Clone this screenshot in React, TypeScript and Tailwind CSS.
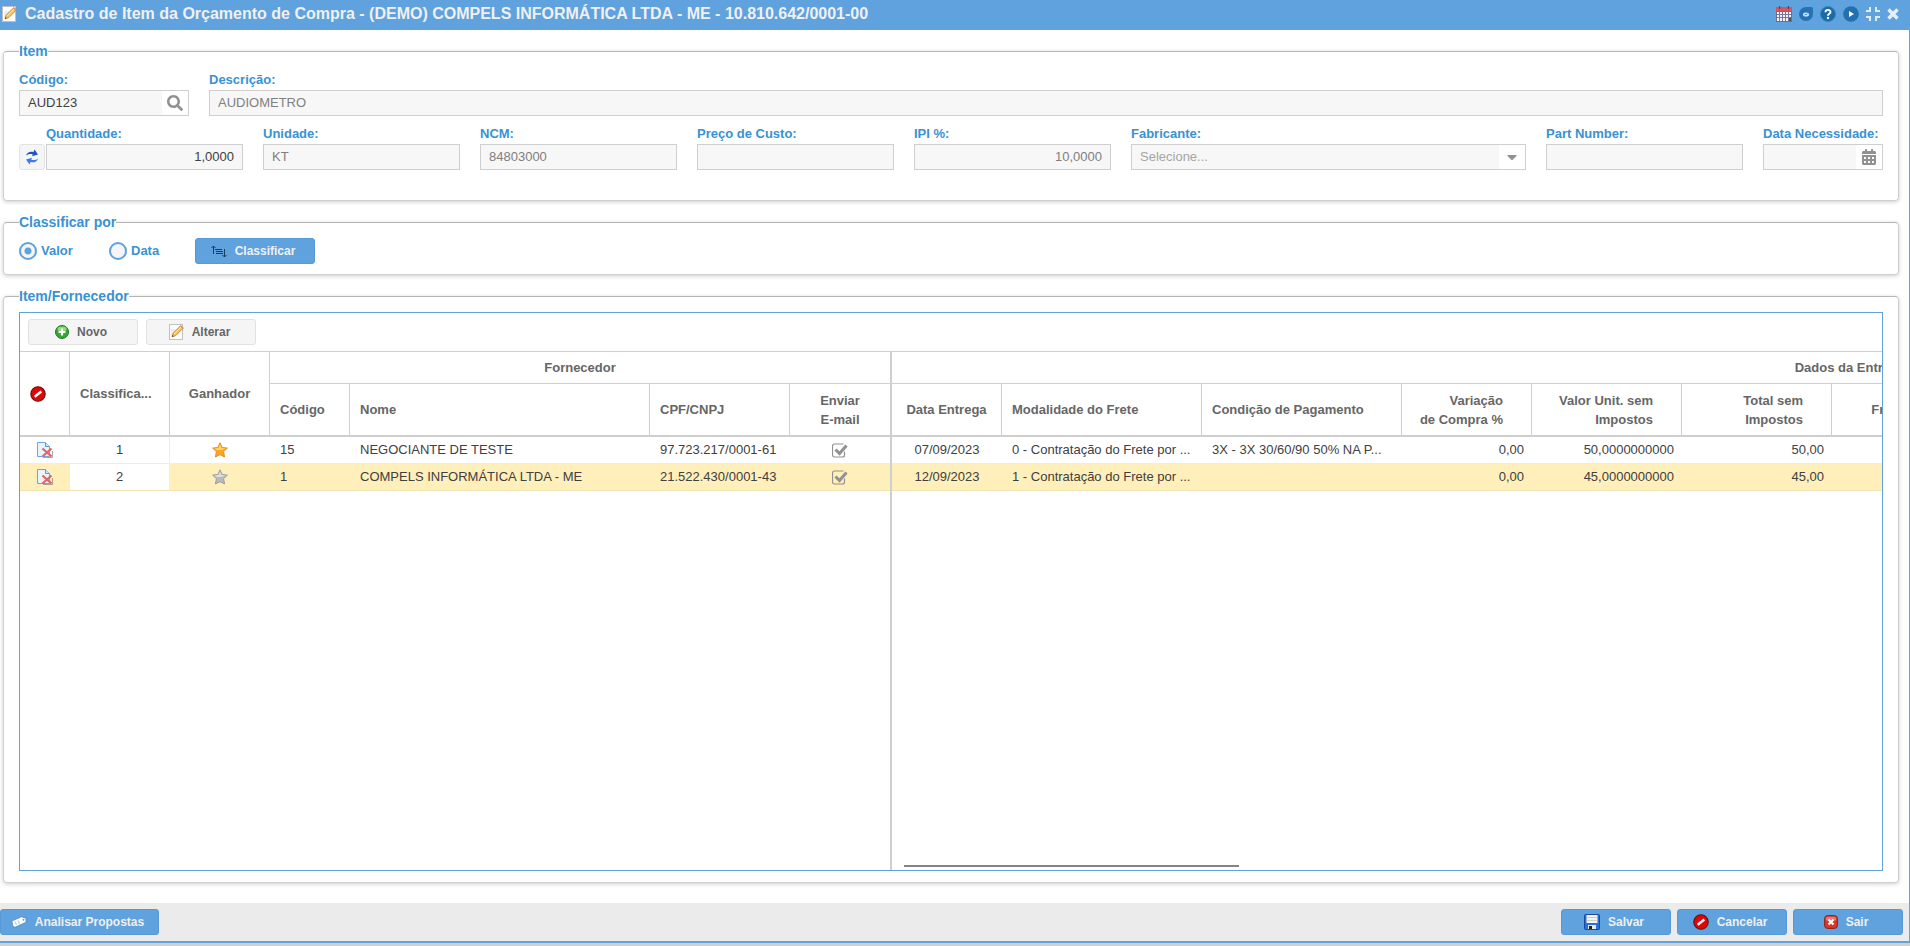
import { useState, type ReactNode } from 'react'
import { FaCalendarAlt, FaCaretDown, FaSearch } from 'react-icons/fa'

function EditIcon() {
  return (
    <svg width="16" height="16" viewBox="0 0 16 16" aria-hidden="true">
      <rect x="1.500" y=".5" width="13" height="15" fill="#fff" stroke="#c0c0c0" />
      <path d="M3 6h5M3 8h4M3 10h2" stroke="#dcdcdc" />
      <path d="M4 12.800 5.200 9 12.600 1.800l2.600 2.400L7.800 11.600Z" fill="#f6c463" stroke="#b87f2a" strokeWidth=".8" />
      <path d="m6 10 7.200-7" stroke="#ffe9a8" />
      <path d="m4 12.800.5-1.700 1.200 1.100Z" fill="#333" />
      <path d="m12.600 1.800 2.600 2.400" stroke="#d98a7a" strokeWidth="1.400" />
    </svg>
  )
}

function ScheduleIcon() {
  return (
    <svg width="16" height="16" viewBox="0 0 16 16" aria-hidden="true">
      <rect y="1" width="16" height="15" fill="#6b6f8c" />
      <rect y="1" width="16" height="4" fill="#e0525b" />
      <path d="M3.500 0v3M12.500 0v3" stroke="#4f4a5c" strokeWidth="1.400" />
      <rect x="1" y="6" width="14" height="9" fill="#f3f3f8" />
      <path d="M3.500 6v9M6.500 6v9M9.500 6v9M12.500 6v9M1 8.500h14M1 11.500h14" stroke="#75789a" />
      <rect x="13" y="12" width="2" height="3" fill="#555" />
    </svg>
  )
}

function ChatIcon() {
  return (
    <svg width="14" height="14" viewBox="0 0 14 14" aria-hidden="true">
      <path d="M7 0h5.500A1.500 1.500 0 0 1 14 1.500V7a7 7 0 1 1-7-7Z" fill="#2474b5" />
      <ellipse cx="7" cy="7.500" rx="3" ry="2" fill="#d8e8f6" />
      <path d="M5.500 7.800 8.500 7" stroke="#2474b5" strokeWidth=".8" />
    </svg>
  )
}

function HelpIcon() {
  return (
    <svg width="16" height="16" viewBox="0 0 16 16" aria-hidden="true">
      <circle cx="8" cy="8" r="7.500" fill="#1c6ba8" stroke="#2f87c0" />
      <path d="M5.500 6.200C5.500 3.200 10.500 3.200 10.500 6 10.500 7.800 8 7.700 8 9.700" fill="none" stroke="#fff" strokeWidth="1.900" />
      <circle cx="8" cy="12" r="1.200" fill="#fff" />
    </svg>
  )
}

function PlayIcon() {
  return (
    <svg width="16" height="16" viewBox="0 0 16 16" aria-hidden="true">
      <circle cx="8" cy="8" r="7.800" fill="#2270af" />
      <path d="M6 5v6l5-3Z" fill="#fff" />
    </svg>
  )
}

function CompressIcon() {
  return (
    <svg width="14" height="14" viewBox="0 0 14 14" aria-hidden="true">
      <path d="M0 4h4V0M10 0v4h4M14 10h-4v4M4 14v-4H0" fill="none" stroke="#dfecf8" strokeWidth="2" />
    </svg>
  )
}

function CloseIcon() {
  return (
    <svg width="12" height="12" viewBox="0 0 12 12" aria-hidden="true">
      <path d="m1.500 1.500 9 9m0-9-9 9" stroke="#e6f0f9" strokeWidth="3.400" />
    </svg>
  )
}

function RefreshIcon() {
  return (
    <svg width="12" height="16" viewBox="0 0 12 16" aria-hidden="true">
      <path d="M0 6.500C1 3 4.500 2 7.500 3L8.500.5 12 5.500 6 7.200l.8-2C4 4.500 1.800 5 0 6.500Z" fill="#1d54c8" />
      <path d="M12 9.500c-1 3.500-4.500 4.500-7.500 3.500l-1 2.500L0 10.500l6-1.700-.8 2c2.800.7 5 .2 6.800-1.300Z" fill="#3f7be8" />
    </svg>
  )
}

function SortIcon() {
  return (
    <svg width="16" height="13" viewBox="0 0 16 13" aria-hidden="true" fill="none" stroke="#1d3c5c">
      <path d="M2.500 9V1M.5 3l2-2 2 2M13.500 4v8M11.500 10l2 2 2-2M4 4.500h7M5 6.500h7M5 8.500h7" />
    </svg>
  )
}

function AddIcon() {
  return (
    <svg width="14" height="14" viewBox="0 0 14 14" aria-hidden="true">
      <circle cx="7" cy="7" r="6.500" fill="#3aa535" stroke="#1f7a22" />
      <ellipse cx="7" cy="4" rx="4.500" ry="2.600" fill="#8fdb7c" />
      <path d="M7 3.500v7M3.500 7h7" stroke="#fff" strokeWidth="2.200" />
    </svg>
  )
}

function DenyIcon() {
  return (
    <svg width="16" height="16" viewBox="0 0 16 16" aria-hidden="true">
      <circle cx="8" cy="8" r="7.200" fill="#e00707" stroke="#6b0a0a" strokeWidth="1.100" />
      <path d="m4.700 10.700 6.600-5.200" stroke="#fff" strokeWidth="2.400" />
    </svg>
  )
}

function DeleteIcon() {
  return (
    <svg width="16" height="16" viewBox="0 0 16 16" aria-hidden="true">
      <path d="M.5.5h8l4 4v10H.5Z" fill="#eaf2fc" stroke="#6fa4e4" />
      <path d="M8.500.5v4h4" fill="#d3e4f9" stroke="#5a98e0" />
      <path d="m5.500 6.500 9 8M14.500 6.500l-9 8" stroke="#e26464" strokeWidth="2.200" />
      <path d="M6 15.500h9.500V9" fill="none" stroke="#9a8a8a" strokeWidth=".8" />
    </svg>
  )
}

function StarIcon({ winner }: { winner: boolean }) {
  return (
    <svg width="16" height="16" viewBox="0 0 16 16" aria-hidden="true">
      <path
        d="m8 .8 2.200 4.700 5.200.6-3.800 3.500 1 5.400L8 12.700 3.400 15l1-5.400L.6 6.100l5.200-.6Z"
        fill={winner ? '#fba522' : '#bababa'}
        stroke={winner ? '#dd8a2c' : '#999'}
        strokeWidth=".9"
      />
      <path d="m8 2.600 1.500 3.500 4 .5-4 1.400H4.500l-2-1.400 4-.5Z" fill={winner ? '#ffd462' : '#dedede'} />
    </svg>
  )
}

function CheckIcon() {
  return (
    <svg width="17" height="15" viewBox="0 0 17 15" aria-hidden="true" fill="none" stroke="#919191">
      <path d="M12.500 8.500V12a2 2 0 0 1-2 2h-8a2 2 0 0 1-2-2V3a2 2 0 0 1 2-2h9" strokeWidth="1.200" />
      <path d="m3.500 6.500 4 4 7-8" strokeWidth="3" />
    </svg>
  )
}

function TagIcon() {
  return (
    <svg width="16" height="12" viewBox="0 0 16 12" aria-hidden="true">
      <path d="M.8 5 10.500.8l4.500 1.400v4L4 11.300l-2-1Z" fill="#fff" stroke="#4a7fb0" strokeWidth=".7" />
      <path d="m4 5.500 1.500 3.500M7 4.500 8.500 8" stroke="#b4d4f0" strokeWidth="1.400" />
      <circle cx="12.500" cy="3.800" r="1" fill="#5fa2dd" />
    </svg>
  )
}

function SaveIcon() {
  return (
    <svg width="16" height="16" viewBox="0 0 16 16" aria-hidden="true">
      <rect x=".5" y=".5" width="15" height="15" rx="1" fill="#2a6fd6" stroke="#164a9c" />
      <rect x="2.500" y="1" width="11" height="8" fill="#f2f2f2" />
      <path d="M3 3.500h10M3 6.500h10" stroke="#cfcfcf" />
      <rect x="4" y="11" width="8" height="4" fill="#e8e8e8" />
      <rect x="5" y="12" width="3" height="3" fill="#222" />
    </svg>
  )
}

function ExitIcon() {
  return (
    <svg width="14" height="14" viewBox="0 0 14 14" aria-hidden="true">
      <rect x=".6" y=".6" width="12.800" height="12.800" rx="3" fill="#d8372a" stroke="#8f1e17" />
      <rect x="1.800" y="1.800" width="10.400" height="4" rx="2" fill="#ec7a6c" />
      <path d="m4.500 4.500 5 5m0-5-5 5" stroke="#fff" strokeWidth="2.200" />
    </svg>
  )
}

const fieldBox = 'flex h-[26px] border border-[#cfcfcf] bg-[#f7f7f7]'
const fieldInput = 'min-w-0 flex-1 bg-transparent px-2 text-[13px] outline-none'
const fieldLabel = 'block h-5 whitespace-nowrap text-[13px] leading-5 font-bold text-[#3892d3]'

type FieldProps = {
  id: string
  label: string
  value?: string
  className: string
  inputClass?: string
  trigger?: ReactNode
  triggerLabel?: string
}

function Field({ id, label, value = '', className, inputClass = 'text-[#808080]', trigger, triggerLabel }: FieldProps) {
  return (
    <div className={`min-w-0 ${className}`}>
      <label htmlFor={id} className={fieldLabel}>
        {label}
      </label>
      <div className={fieldBox}>
        <input id={id} type="text" defaultValue={value} className={`${fieldInput} ${inputClass}`} />
        {trigger && (
          <button type="button" aria-label={triggerLabel} className="flex w-[26px] items-center justify-center bg-white text-[#919191]">
            {trigger}
          </button>
        )}
      </div>
    </div>
  )
}

function Panel({ title, className = '', children }: { title: string; className?: string; children: ReactNode }) {
  return (
    <fieldset className={`mr-[10px] ml-[3px] min-w-0 rounded border border-[#cfcfcf] border-t-[#b5b5b5] px-[15px] shadow-[0_1px_4px_rgba(0,0,0,0.2)] ${className}`}>
      <legend className="bg-white text-[14px] leading-4 font-bold text-[#3892d3]">{title}</legend>
      {children}
    </fieldset>
  )
}

function Button({ icon, children, light = false, className = 'w-[110px]' }: { icon: ReactNode; children: ReactNode; light?: boolean; className?: string }) {
  const tone = light ? 'border-[#e1e1e1] bg-[#f5f5f5] text-[#666]' : 'border-[#5599d6] bg-[#5fa2dd] text-[#f0f0f0]'
  return (
    <button type="button" className={`flex h-[26px] items-center justify-center gap-2 rounded-[3px] border pr-1 text-[12px] font-bold ${tone} ${className}`}>
      {icon}
      {children}
    </button>
  )
}

const rows = [
  {
    position: '1',
    winner: true,
    code: '15',
    name: 'NEGOCIANTE DE TESTE',
    document: '97.723.217/0001-61',
    delivery: '07/09/2023',
    freight: '0 - Contratação do Frete por ...',
    payment: '3X - 3X 30/60/90 50% NA P...',
    variation: '0,00',
    unit: '50,0000000000',
    total: '50,00',
  },
  {
    position: '2',
    winner: false,
    code: '1',
    name: 'COMPELS INFORMÁTICA LTDA - ME',
    document: '21.522.430/0001-43',
    delivery: '12/09/2023',
    freight: '1 - Contratação do Frete por ...',
    payment: '',
    variation: '0,00',
    unit: '45,0000000000',
    total: '45,00',
  },
]

const groupTh = 'border-b border-[#cfcfcf] text-center text-[13px] font-bold'
const th = 'border-r border-b-2 border-[#cfcfcf] px-[10px] text-[13px] leading-[19px] font-bold'
const td = 'whitespace-nowrap pr-2 pl-[10px] text-[13px]'
const bodyRow = 'h-[27px] [&>td]:border-b [&>td]:border-b-[#ededed]'
const selectedRow = 'h-[27px] bg-[#ffefbb] [&>td]:border-b [&>td]:border-b-[#f2e3b3]'

function LockedTable({ selected, onSelect }: { selected: number; onSelect: (i: number) => void }) {
  return (
    <table className="w-[870px] table-fixed border-separate border-spacing-0">
      <colgroup>
        <col className="w-[50px]" />
        <col className="w-[100px]" />
        <col className="w-[100px]" />
        <col className="w-[80px]" />
        <col className="w-[300px]" />
        <col className="w-[140px]" />
        <col className="w-[100px]" />
      </colgroup>
      <thead className="text-[#666]">
        <tr className="h-8">
          <th rowSpan={2} className={th}>
            <DenyIcon />
          </th>
          <th rowSpan={2} className={`${th} text-left`}>Classifica...</th>
          <th rowSpan={2} className={`${th} text-center`}>Ganhador</th>
          <th colSpan={4} className={groupTh}>Fornecedor</th>
        </tr>
        <tr className="h-[53px]">
          <th className={`${th} text-left`}>Código</th>
          <th className={`${th} text-left`}>Nome</th>
          <th className={`${th} text-left`}>CPF/CNPJ</th>
          <th className="border-b-2 border-[#cfcfcf] text-center text-[13px] leading-[19px] font-bold">
            Enviar
            <br />
            E-mail
          </th>
        </tr>
      </thead>
      <tbody>
        {rows.map((row, i) => (
          <tr key={row.code} onClick={() => onSelect(i)} className={selected === i ? selectedRow : bodyRow}>
            <td>
              <button type="button" aria-label="Excluir" className="mx-auto block w-4">
                <DeleteIcon />
              </button>
            </td>
            <td className="border-r border-r-[#ededed] bg-white text-center text-[13px]">{row.position}</td>
            <td>
              <div className="flex justify-center">
                <StarIcon winner={row.winner} />
              </div>
            </td>
            <td className={td}>{row.code}</td>
            <td className={td}>{row.name}</td>
            <td className={td}>{row.document}</td>
            <td>
              <div className="flex justify-center">
                <CheckIcon />
              </div>
            </td>
          </tr>
        ))}
      </tbody>
    </table>
  )
}

function DetailTable({ selected, onSelect }: { selected: number; onSelect: (i: number) => void }) {
  return (
    <table className="w-[1916px] table-fixed border-separate border-spacing-0">
      <colgroup>
        <col className="w-[110px]" />
        <col className="w-[200px]" />
        <col className="w-[200px]" />
        <col className="w-[130px]" />
        <col className="w-[150px]" />
        <col className="w-[150px]" />
        <col className="w-[100px]" />
        <col />
      </colgroup>
      <thead className="text-[#666]">
        <tr className="h-8">
          <th colSpan={8} className={groupTh}>Dados da Entrega</th>
        </tr>
        <tr className="h-[53px]">
          <th className={`${th} text-center whitespace-nowrap`}>Data Entrega</th>
          <th className={`${th} text-left`}>Modalidade do Frete</th>
          <th className={`${th} text-left`}>Condição de Pagamento</th>
          <th className={`${th} text-right`}>
            <div className="pr-[18px] whitespace-nowrap">
              Variação
              <br />
              de Compra %
            </div>
          </th>
          <th className={`${th} text-right`}>
            <div className="pr-[18px] whitespace-nowrap">
              Valor Unit. sem
              <br />
              Impostos
            </div>
          </th>
          <th className={`${th} text-right`}>
            <div className="pr-[18px] whitespace-nowrap">
              Total sem
              <br />
              Impostos
            </div>
          </th>
          <th className={`${th} text-right`}>
            <div className="pr-[18px]">Frete</div>
          </th>
          <th className={th} />
        </tr>
      </thead>
      <tbody>
        {rows.map((row, i) => (
          <tr key={row.code} onClick={() => onSelect(i)} className={selected === i ? selectedRow : bodyRow}>
            <td className="text-center text-[13px]">{row.delivery}</td>
            <td className={td}>{row.freight}</td>
            <td className={td}>{row.payment}</td>
            <td className={`${td} text-right`}>{row.variation}</td>
            <td className={`${td} text-right`}>{row.unit}</td>
            <td className={`${td} text-right`}>{row.total}</td>
            <td />
            <td />
          </tr>
        ))}
      </tbody>
    </table>
  )
}

const radio =
  'size-[18px] appearance-none rounded-full border-2 border-[#5fa2dd] bg-[#f5f5f5] checked:bg-[radial-gradient(circle,#5fa2dd_3px,#f5f5f5_4px)]'

export default function App() {
  const [selected, setSelected] = useState(1)
  const [sortBy, setSortBy] = useState('valor')

  return (
    <div className="flex min-h-screen flex-col bg-[#d0d0d0] pb-[3px] font-['Liberation_Sans',Arial,sans-serif] text-[13px] text-[#404040]">
      <div className="flex flex-1 flex-col border-r border-b-2 border-[#5fa2dd] bg-white">
        <header className="flex h-[30px] items-center bg-[#5fa2dd] pr-[10px] pb-[3px] pl-[1px]">
          <EditIcon />
          <h1 className="ml-2 flex-1 text-[16px] leading-5 font-bold text-[#f0f0f0]">
            Cadastro de Item da Orçamento de Compra - (DEMO) COMPELS INFORMÁTICA LTDA - ME - 10.810.642/0001-00
          </h1>
          <div className="flex items-center gap-[7px]">
            <button type="button" aria-label="Agenda"><ScheduleIcon /></button>
            <button type="button" aria-label="Conversa"><ChatIcon /></button>
            <button type="button" aria-label="Ajuda"><HelpIcon /></button>
            <button type="button" aria-label="Vídeo"><PlayIcon /></button>
            <button type="button" aria-label="Restaurar"><CompressIcon /></button>
            <button type="button" aria-label="Fechar"><CloseIcon /></button>
          </div>
        </header>

        <main className="flex flex-1 flex-col pt-[13px]">
          <Panel title="Item" className="pb-[30px]">
            <div className="flex gap-5 pt-[11px]">
              <Field id="codigo" label="Código:" value="AUD123" className="w-[170px]" inputClass="text-[#404040]" trigger={<FaSearch size={16} />} triggerLabel="Pesquisar" />
              <Field id="descricao" label="Descrição:" value="AUDIOMETRO" className="flex-1" />
            </div>
            <div className="flex items-end gap-5 pt-2">
              <div className="flex flex-1 items-end gap-px">
                <button type="button" aria-label="Atualizar" className="flex size-[26px] items-center justify-center rounded-[3px] border border-[#e4e4e4] bg-[#f5f5f5]">
                  <RefreshIcon />
                </button>
                <Field id="quantidade" label="Quantidade:" value="1,0000" className="w-[197px]" inputClass="text-right text-[#404040]" />
              </div>
              <Field id="unidade" label="Unidade:" value="KT" className="w-[197px]" />
              <Field id="ncm" label="NCM:" value="84803000" className="w-[197px]" />
              <Field id="custo" label="Preço de Custo:" className="w-[197px]" />
              <Field id="ipi" label="IPI %:" value="10,0000" className="w-[197px]" inputClass="text-right text-[#808080]" />
              <div className="w-[395px] min-w-0">
                <label htmlFor="fabricante" className={fieldLabel}>
                  Fabricante:
                </label>
                <div className={`relative ${fieldBox}`}>
                  <select id="fabricante" className="min-w-0 flex-1 appearance-none px-2 text-[13px] text-[#a5a5a5] outline-none">
                    <option>Selecione...</option>
                  </select>
                  <span className="pointer-events-none absolute inset-y-0 right-0 flex w-[26px] items-center justify-center bg-white text-[#919191]">
                    <FaCaretDown size={16} />
                  </span>
                </div>
              </div>
              <Field id="part" label="Part Number:" className="w-[197px]" />
              <Field id="data-necessidade" label="Data Necessidade:" className="w-[120px]" trigger={<FaCalendarAlt size={16} />} triggerLabel="Abrir calendário" />
            </div>
          </Panel>

          <Panel title="Classificar por" className="mt-[13px] pb-[10px]">
            <div className="flex items-center pt-2 font-bold text-[#3892d3]">
              <label className="flex w-[90px] items-center gap-1">
                <input type="radio" name="ordem" checked={sortBy === 'valor'} onChange={() => setSortBy('valor')} className={radio} />
                Valor
              </label>
              <label className="flex w-[86px] items-center gap-1">
                <input type="radio" name="ordem" checked={sortBy === 'data'} onChange={() => setSortBy('data')} className={radio} />
                Data
              </label>
              <Button icon={<SortIcon />} className="w-[120px]">Classificar</Button>
            </div>
          </Panel>

          <Panel title="Item/Fornecedor" className="mt-[13px] mb-5 pb-[11px]">
            <div className="mt-2 flex h-[calc(100vh-387px)] min-h-[200px] flex-col border border-[#5fa2dd]">
              <div className="flex h-[38px] items-center gap-2 px-2">
                <Button icon={<AddIcon />} light>Novo</Button>
                <Button icon={<EditIcon />} light>Alterar</Button>
              </div>
              <div className="flex min-h-0 flex-1 border-t border-[#cfcfcf]">
                <div className="w-[872px] shrink-0 border-r-2 border-[#cfcfcf]">
                  <LockedTable selected={selected} onSelect={setSelected} />
                </div>
                <div className="flex min-w-0 flex-1 flex-col overflow-hidden">
                  <DetailTable selected={selected} onSelect={setSelected} />
                  <div className="mt-auto mb-[3px] ml-3 h-[2px] w-[335px] bg-[#858585]" />
                </div>
              </div>
            </div>
          </Panel>
        </main>

        <footer className="flex h-[38px] items-center gap-[6px] bg-[#ebebeb] pr-[6px]">
          <Button icon={<TagIcon />} className="mr-auto w-[159px]">Analisar Propostas</Button>
          <Button icon={<SaveIcon />}>Salvar</Button>
          <Button icon={<DenyIcon />}>Cancelar</Button>
          <Button icon={<ExitIcon />}>Sair</Button>
        </footer>
      </div>
    </div>
  )
}
